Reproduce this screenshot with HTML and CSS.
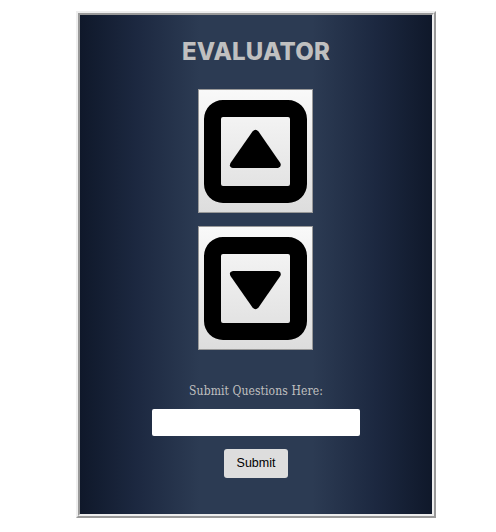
FILE: index.html
```html
<!DOCTYPE html>
<html lang="en">
<head>
<meta charset="utf-8">
<title>Evaluator</title>
<link rel="stylesheet" href="styles.css">
</head>
<body>
<main class="frame">
  <div class="panel">
    <h1 class="title">EVALUATOR</h1>
    <button class="vote" type="button" aria-label="Up">
      <svg width="113" height="122" viewBox="0 0 113 122">
        <path fill-rule="evenodd" d="M24 10H89A19 19 0 0 1 108 29V94A19 19 0 0 1 89 113H24A19 19 0 0 1 5 94V29A19 19 0 0 1 24 10Z M24 27Q22 27 22 29V94Q22 96 24 96H89Q91 96 91 94V29Q91 27 89 27Z"/>
        <path d="M53.500 41.500Q56.500 38 59.500 41.500L81.300 73Q83 77 79 78H34Q29.500 77 31.500 73Z"/>
      </svg>
    </button>
    <button class="vote" type="button" aria-label="Down">
      <svg width="113" height="122" viewBox="0 0 113 122">
        <path fill-rule="evenodd" d="M24 10H89A19 19 0 0 1 108 29V94A19 19 0 0 1 89 113H24A19 19 0 0 1 5 94V29A19 19 0 0 1 24 10Z M24 27Q22 27 22 29V94Q22 96 24 96H89Q91 96 91 94V29Q91 27 89 27Z"/>
        <path d="M53.500 80.500Q56.500 84 59.500 80.500L81.300 49Q83 45 79 44H34Q29.500 45 31.500 49Z"/>
      </svg>
    </button>
    <form class="questions">
      <label class="label" for="question">Submit Questions Here:</label>
      <input class="field" id="question" type="text">
      <button class="submit" type="button">Submit</button>
    </form>
  </div>
</main>
</body>
</html>
```
FILE: styles.css
```css
* { box-sizing: border-box; }
body { margin: 0; background: #fff; }
.frame {
  width: 360px;
  height: 507px;
  margin: 11px 0 0 76px;
  border: 2px solid;
  border-color: #eee #999 #999 #eee;
}
.panel {
  height: 100%;
  border: 2px solid;
  border-color: #999 #eee #eee #999;
  display: flex;
  flex-direction: column;
  align-items: center;
  background: linear-gradient(90deg, #0f182a 0, #1c2840 16%, #2c3b53 34%, #2c3b53 66%, #1c2840 84%, #0f182a 100%);
}
.title {
  margin: 22px 0 22px;
  font: 800 24px/30px Inter, sans-serif;
  letter-spacing: 0.2px;
  color: #c0c0c0;
  white-space: nowrap;
}
.vote {
  width: 115px;
  height: 124px;
  margin: 0 1px 13px 0;
  padding: 0;
  border: 1px solid #999;
  background: linear-gradient(#f9f9f9, #ddd);
}
.vote svg { display: block; }
.questions {
  display: flex;
  flex-direction: column;
  align-items: center;
  margin-top: 18px;
}
.label {
  font: 12px/20px "DejaVu Serif Condensed", "DejaVu Serif", serif;
  letter-spacing: 0.1px;
  color: #c0c0c0;
  white-space: nowrap;
}
.field {
  width: 208px;
  height: 27px;
  margin: 8px 0 13px;
  border: 0;
  border-radius: 2px;
  background: #fff;
}
.submit {
  width: 64px;
  height: 29px;
  padding: 0 0 2px;
  border: 0;
  border-radius: 3px;
  background: #ddd;
  color: #000;
  font: 12.5px "Liberation Sans", sans-serif;
}
```
